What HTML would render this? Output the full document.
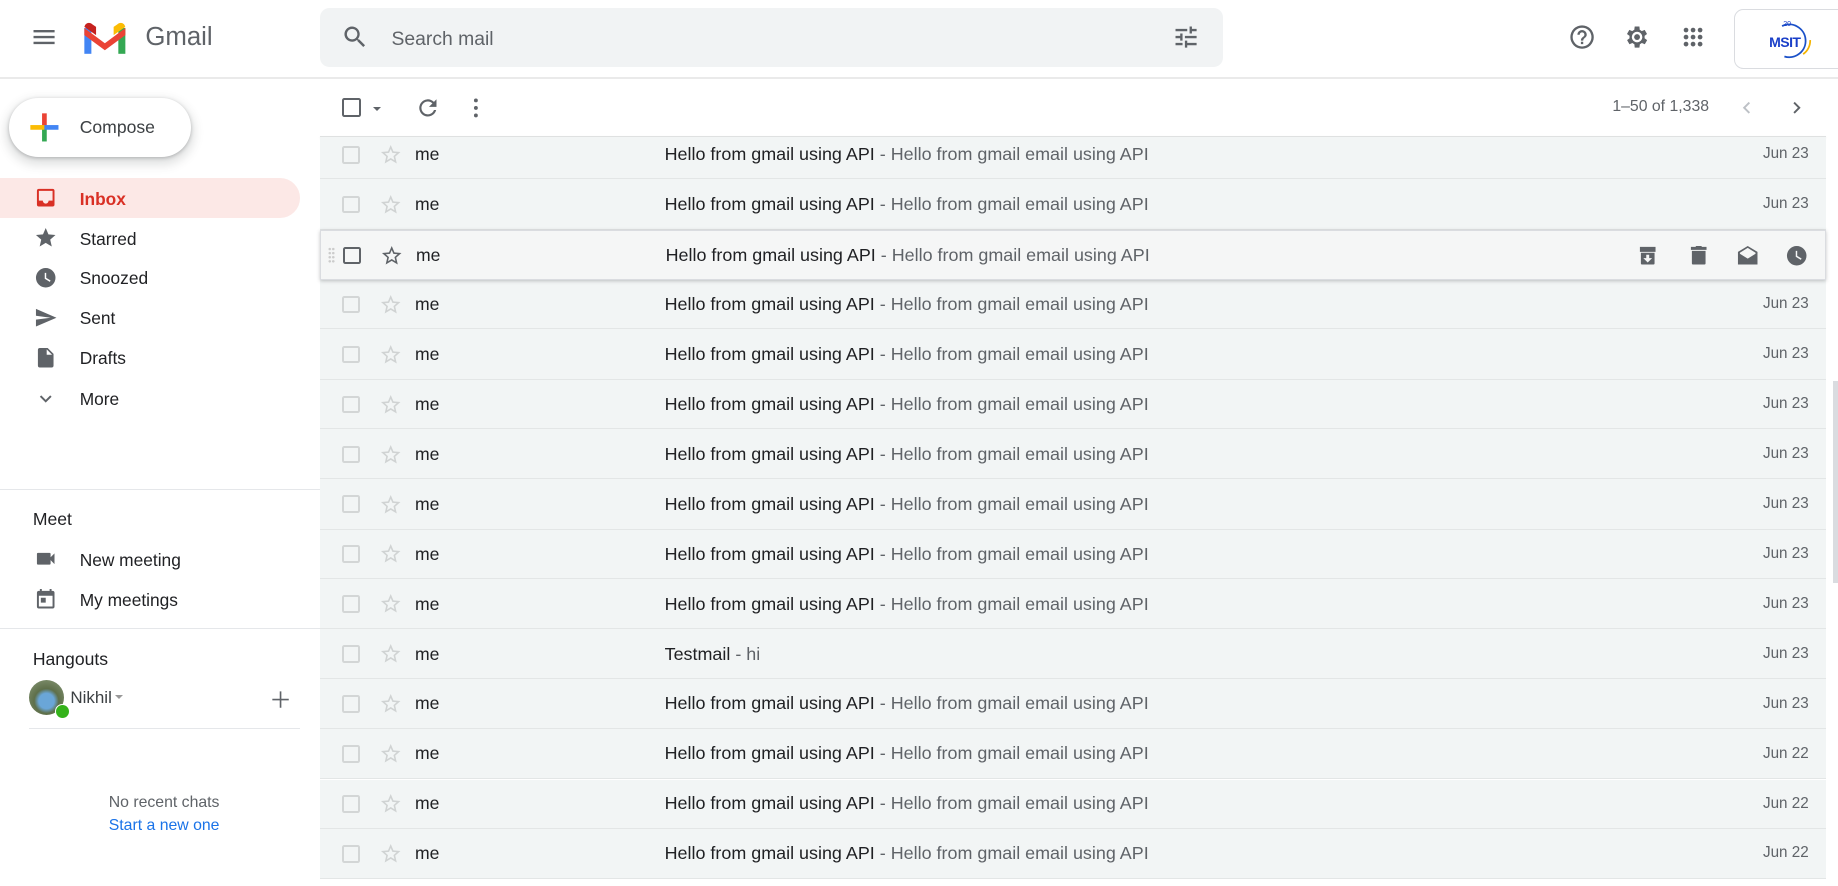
<!DOCTYPE html>
<html><head><meta charset="utf-8"><style>
html,body{margin:0;padding:0;background:#fff;overflow:hidden;}
body{width:1838px;height:886px;}
#w{zoom:1.17219;width:1568px;height:756px;position:relative;font-family:"Liberation Sans",Arial,sans-serif;color:#202124;overflow:hidden;}
.a{position:absolute;}
.ic{position:absolute;fill:#5f6368;}
.nav{position:absolute;left:68px;font-size:14.8px;color:#202124;}
.row{position:absolute;left:273px;width:1285px;background:#f2f5f5;border-bottom:1px solid #e3e6e6;box-sizing:border-box;}
.row .cb{position:absolute;left:19px;width:15px;height:15px;border:2px solid #d3d6d6;border-radius:2px;box-sizing:border-box;}
.row .st{position:absolute;left:50px;}
.row .me{position:absolute;left:81px;font-size:15px;}
.row .sub{position:absolute;left:294px;font-size:15.3px;white-space:nowrap;}
.row .sub span{color:#5f6368;}
.row .dt{position:absolute;right:15px;font-size:13px;color:#5f6368;}
.hov{background:#f5f6f6;box-shadow:0 1px 3px rgba(60,64,67,.3);border:1px solid #dadce0;z-index:2;}
</style></head><body><div id="w">
<div class="a" style="left:0;top:66px;width:1568px;height:1px;background:#eaeaea"></div>
<svg class="ic" style="left:26px;top:20px" width="24" height="24" viewBox="0 0 24 24"><path d="M3 6h18v2H3zm0 5h18v2H3zm0 5h18v2H3z"/></svg>
<svg class="a" style="left:70px;top:18px" width="39" height="30" viewBox="0 0 39 30">
<path d="M2 28V6h6v22z" fill="#4285f4"/><path d="M31 28V6h6v22z" fill="#34a853"/>
<path d="M2 6l17.5 13L37 6v6L19.5 25 2 12z" fill="#ea4335"/>
<path d="M2 6c0-4 4-6 7-3l3 2v7L2 5z" fill="#c5221f"/><path d="M37 6c0-4-4-6-7-3l-3 2v7l10-7z" fill="#fbbc04"/></svg>
<div class="a" style="left:124px;top:20px;font-size:22px;color:#5f6368">Gmail</div>
<div class="a" style="left:273px;top:7px;width:770px;height:50px;background:#f1f3f4;border-radius:8px"></div>
<svg class="ic" style="left:291px;top:20px" width="24" height="24" viewBox="0 0 24 24"><path d="M15.5 14h-.8l-.3-.3A6.5 6.5 0 1 0 9.5 16a6.5 6.5 0 0 0 4.2-1.6l.3.3v.8l5 5 1.5-1.5-5-5zm-6 0A4.5 4.5 0 1 1 9.5 5a4.5 4.5 0 0 1 0 9z"/></svg>
<div class="a" style="left:334px;top:24px;font-size:16.5px;color:#5f6368">Search mail</div>
<svg class="ic" style="left:1000px;top:20px" width="24" height="24" viewBox="0 0 24 24"><path d="M3 17v2h6v-2H3zM3 5v2h10V5H3zm10 16v-2h8v-2h-8v-2h-2v6h2zM7 9v2H3v2h4v2h2V9H7zm14 4v-2H11v2h10zm-6-4h2V7h4V5h-4V3h-2v6z"/></svg>
<svg class="ic" style="left:1338px;top:20px" width="24" height="24" viewBox="0 0 24 24"><path d="M11 18h2v-2h-2v2zm1-16a10 10 0 1 0 0 20 10 10 0 0 0 0-20zm0 18a8 8 0 1 1 0-16 8 8 0 0 1 0 16zm0-14a4 4 0 0 0-4 4h2a2 2 0 1 1 4 0c0 2-3 1.75-3 5h2c0-2.25 3-2.5 3-5a4 4 0 0 0-4-4z"/></svg>
<svg class="ic" style="left:1385px;top:20px" width="24" height="24" viewBox="0 0 24 24"><path d="M19.4 13a7 7 0 0 0 0-2l2.1-1.6-2-3.5-2.5 1a7 7 0 0 0-1.7-1L15 3h-4l-.4 2.9a7 7 0 0 0-1.7 1l-2.5-1-2 3.5L6.6 11a7 7 0 0 0 0 2l-2.1 1.6 2 3.5 2.5-1a7 7 0 0 0 1.7 1L11 21h4l.4-2.9a7 7 0 0 0 1.7-1l2.5 1 2-3.5z" transform="translate(-1 0)"/><circle cx="12" cy="12" r="4.5" fill="#fff"/><circle cx="12" cy="12" r="2.5"/></svg>
<svg class="ic" style="left:1432px;top:20px" width="24" height="24" viewBox="0 0 24 24"><g><circle cx="6" cy="6" r="2"/><circle cx="12" cy="6" r="2"/><circle cx="18" cy="6" r="2"/><circle cx="6" cy="12" r="2"/><circle cx="12" cy="12" r="2"/><circle cx="18" cy="12" r="2"/><circle cx="6" cy="18" r="2"/><circle cx="12" cy="18" r="2"/><circle cx="18" cy="18" r="2"/></g></svg>
<div class="a" style="left:1479px;top:8px;width:100px;height:49px;border:1px solid #dadce0;border-radius:8px"></div>
<svg class="a" style="left:1508px;top:16px" width="40" height="38" viewBox="0 0 40 38"><path d="M12 6a14 14 0 1 1 2 26" fill="none" stroke="#1a50c8" stroke-width="1.5"/><path d="M30 30a14 14 0 0 0 6-12" fill="none" stroke="#f4b400" stroke-width="1.5"/><text x="13" y="6" font-size="6" fill="#1a3fc8" font-family="Liberation Sans">20</text><text x="1" y="24" font-size="12" font-weight="bold" fill="#1a3fc8" font-family="Liberation Sans" letter-spacing="-0.5">MSIT</text></svg>
<div class="a" style="left:8px;top:84px;width:155px;height:50px;border-radius:25px;box-shadow:0 1px 3px rgba(60,64,67,.3),0 4px 8px 3px rgba(60,64,67,.15);background:#fff"></div>
<svg class="a" style="left:24px;top:95px" width="28" height="28" viewBox="0 0 28 28"><rect x="12" y="2" width="4" height="12" fill="#ea4335"/><rect x="12" y="14" width="4" height="12" fill="#34a853"/><rect x="2" y="12" width="12" height="4" fill="#fbbc04"/><rect x="14" y="12" width="12" height="4" fill="#4285f4"/></svg>
<div class="a" style="left:68px;top:100px;font-size:15px;font-weight:500;color:#3c4043">Compose</div>
<div class="a" style="left:0;top:152px;width:256px;height:34px;background:#fce8e6;border-radius:0 17px 17px 0"></div>
<svg class="a" style="left:29px;top:159px;fill:#d93025" width="20" height="20" viewBox="0 0 24 24"><path d="M19 3H5a2 2 0 0 0-2 2v14a2 2 0 0 0 2 2h14a2 2 0 0 0 2-2V5a2 2 0 0 0-2-2zm0 12h-4a3 3 0 0 1-6 0H5V5h14v10z"/></svg>
<div class="nav" style="top:161px;color:#d93025;font-weight:bold">Inbox</div>
<svg class="ic" style="left:29px;top:193px" width="20" height="20" viewBox="0 0 24 24"><path d="M12 17.3 18.2 21l-1.6-7L22 9.2l-7.2-.6L12 2 9.2 8.6 2 9.2 7.4 14l-1.6 7z"/></svg>
<div class="nav" style="top:195px">Starred</div>
<svg class="ic" style="left:29px;top:227px" width="20" height="20" viewBox="0 0 24 24"><path d="M12 2a10 10 0 1 0 0 20 10 10 0 0 0 0-20zm4.2 14.2L11 13V7h1.5v5.2l4.5 2.7-.8 1.3z"/></svg>
<div class="nav" style="top:229px">Snoozed</div>
<svg class="ic" style="left:29px;top:261px" width="20" height="20" viewBox="0 0 24 24"><path d="M2 21l21-9L2 3v7l15 2-15 2z"/></svg>
<div class="nav" style="top:263px">Sent</div>
<svg class="ic" style="left:29px;top:295px" width="20" height="20" viewBox="0 0 24 24"><path d="M14 2H6a2 2 0 0 0-2 2v16a2 2 0 0 0 2 2h12a2 2 0 0 0 2-2V8l-6-6zm-1 7V3.5L18.5 9H13z"/></svg>
<div class="nav" style="top:297px">Drafts</div>
<svg class="ic" style="left:29px;top:330px" width="20" height="20" viewBox="0 0 24 24"><path d="M16.6 8.6 12 13.2 7.4 8.6 6 10l6 6 6-6z"/></svg>
<div class="nav" style="top:332px">More</div>
<div class="a" style="left:0;top:417px;width:273px;height:1px;background:#e5e7ea"></div>
<div class="a" style="left:28px;top:434px;font-size:15px;font-weight:500">Meet</div>
<svg class="ic" style="left:29px;top:467px" width="20" height="20" viewBox="0 0 24 24"><path d="M17 10.5V7a1 1 0 0 0-1-1H4a1 1 0 0 0-1 1v10a1 1 0 0 0 1 1h12a1 1 0 0 0 1-1v-3.5l4 4v-11l-4 4z"/></svg>
<div class="nav" style="top:469px">New meeting</div>
<svg class="ic" style="left:29px;top:501px" width="20" height="20" viewBox="0 0 24 24"><path d="M19 4h-1V2h-2v2H8V2H6v2H5a2 2 0 0 0-2 2v14a2 2 0 0 0 2 2h14a2 2 0 0 0 2-2V6a2 2 0 0 0-2-2zm0 16H5V9h14v11zM7 11h5v5H7z"/></svg>
<div class="nav" style="top:503px">My meetings</div>
<div class="a" style="left:0;top:536px;width:273px;height:1px;background:#e5e7ea"></div>
<div class="a" style="left:28px;top:554px;font-size:15px;font-weight:500">Hangouts</div>
<div class="a" style="left:25px;top:580px;width:30px;height:30px;border-radius:50%;background:radial-gradient(circle at 50% 60%,#6aa6d8 0 28%,#5e6f4a 45%,#8a9a7a 100%)"></div>
<div class="a" style="left:47px;top:601px;width:11px;height:11px;border-radius:50%;background:#34b21a;border:1px solid #fff"></div>
<div class="a" style="left:60px;top:587px;font-size:14.5px;color:#3c4043">Nikhil</div>
<div class="a" style="left:98px;top:593px;width:0;height:0;border-left:4px solid transparent;border-right:4px solid transparent;border-top:4px solid #999"></div>
<svg class="ic" style="left:230px;top:588px" width="18" height="18" viewBox="0 0 18 18"><path d="M8.3 2h1.4v6.3H16v1.4H9.7V16H8.3V9.7H2V8.3h6.3z"/></svg>
<div class="a" style="left:25px;top:621px;width:231px;height:1px;background:#e5e7ea"></div>
<div class="a" style="left:0;width:280px;top:677px;text-align:center;font-size:13.5px;color:#5f6368">No recent chats</div>
<div class="a" style="left:0;width:280px;top:697px;text-align:center;font-size:13.5px;color:#1a73e8">Start a new one</div>
<div class="a" style="left:292px;top:84px;width:16px;height:16px;border:2px solid #5f6368;border-radius:2px;box-sizing:border-box"></div>
<div class="a" style="left:318px;top:91px;width:0;height:0;border-left:4px solid transparent;border-right:4px solid transparent;border-top:4px solid #5f6368"></div>
<svg class="ic" style="left:354px;top:81px" width="22" height="22" viewBox="0 0 24 24"><path d="M17.65 6.35A8 8 0 1 0 19.73 14h-2.08A6 6 0 1 1 12 6a5.9 5.9 0 0 1 4.22 1.78L13 11h7V4l-2.35 2.35z"/></svg>
<svg class="ic" style="left:395px;top:81px" width="22" height="22" viewBox="0 0 24 24"><circle cx="12" cy="5" r="1.8"/><circle cx="12" cy="12" r="1.8"/><circle cx="12" cy="19" r="1.8"/></svg>
<div class="a" style="left:1300px;width:158px;text-align:right;top:84px;font-size:13.5px;color:#5f6368">1–50 of 1,338</div>
<svg class="a" style="left:1480px;top:82px" width="20" height="20" viewBox="0 0 24 24" fill="#bdc1c6"><path d="M15.4 7.4 14 6l-6 6 6 6 1.4-1.4L10.8 12z"/></svg>
<svg class="ic" style="left:1523px;top:82px" width="20" height="20" viewBox="0 0 24 24"><path d="M10 6 8.6 7.4 13.2 12l-4.6 4.6L10 18l6-6z"/></svg>
<div class="a" style="left:273px;top:116px;width:1285px;height:1px;background:#dfe1e1;box-shadow:0 1px 2px rgba(0,0,0,.1)"></div>
<div id="rows"></div>
<div class="a" style="left:1564px;top:325px;width:4px;height:172px;background:#dadce0"></div>
</div>
<script>
(function(){
var h="";
var star='<svg class="st" style="top:TOPpx" width="20" height="20" viewBox="0 0 24 24"><path d="M22 9.2l-7.2-.6L12 2 9.2 8.6 2 9.2 7.4 14l-1.6 7L12 17.3l6.2 3.7-1.6-7L22 9.2zM12 15.4l-3.8 2.3 1-4.3-3.3-2.9 4.4-.4L12 6.1l1.7 4 4.4.4-3.3 2.9 1 4.3L12 15.4z" fill="COL"/></svg>';
for(var i=0;i<15;i++){
var hv=i==2;
var c=132+42.6*i;
var rt=Math.round(i==0?117:c-21.3);
var rb=Math.round(c+21.3);
var hh=rb-rt;
var ct=c-rt;
var sub=i==10?'Testmail<span> - hi</span>':'Hello from gmail using API<span> - Hello from gmail email using API</span>';
var dt=i>=12?'Jun 22':'Jun 23';
h+='<div class="row'+(hv?' hov':'')+'" style="top:'+rt+'px;height:'+hh+'px">';
h+='<div class="cb" style="top:'+(ct-7.5)+'px;'+(hv?'border-color:#5f6368':'')+'"></div>'+star.replace('COL',hv?'#5f6368':'#d0d3d3').replace('TOP',ct-10);
h+='<div class="me" style="top:'+(ct-9)+'px">me</div><div class="sub" style="top:'+(ct-9)+'px">'+sub+'</div>';
if(hv){
var t=ct-10;
h+='<svg class="ic" style="left:1122px;top:'+t+'px" width="20" height="20" viewBox="0 0 24 24"><path d="M20 3H4v5h16zM5 9v11a1 1 0 0 0 1 1h12a1 1 0 0 0 1-1V9zm7 10-4.5-4.5h3V11h3v3.5h3z"/></svg>';
h+='<svg class="ic" style="left:1165px;top:'+t+'px" width="20" height="20" viewBox="0 0 24 24"><path d="M15 3V2H9v1H4v3h16V3zM5 7v13a1 1 0 0 0 1 1h12a1 1 0 0 0 1-1V7z"/></svg>';
h+='<svg class="ic" style="left:1207px;top:'+t+'px" width="20" height="20" viewBox="0 0 24 24"><path d="M12 2 2 8v13h20V8L12 2zm8 8-8 5-8-5V9l8-5 8 5z"/></svg>';
h+='<svg class="ic" style="left:1249px;top:'+t+'px" width="20" height="20" viewBox="0 0 24 24"><path d="M12 2a10 10 0 1 0 0 20 10 10 0 0 0 0-20zm4.2 14.2L11 13V7h1.5v5.2l4.5 2.7-.8 1.3z"/></svg>';
h+='<div class="a" style="left:6px;top:'+(ct-7)+'px;width:6px;height:14px;background:radial-gradient(circle,#ccc 1px,transparent 1.2px) 0 0/3px 3.5px"></div>';
}else h+='<div class="dt" style="top:'+(ct-8)+'px">'+dt+'</div>';
h+='</div>';}
document.getElementById('rows').innerHTML=h;
})();
</script>
</body></html>
